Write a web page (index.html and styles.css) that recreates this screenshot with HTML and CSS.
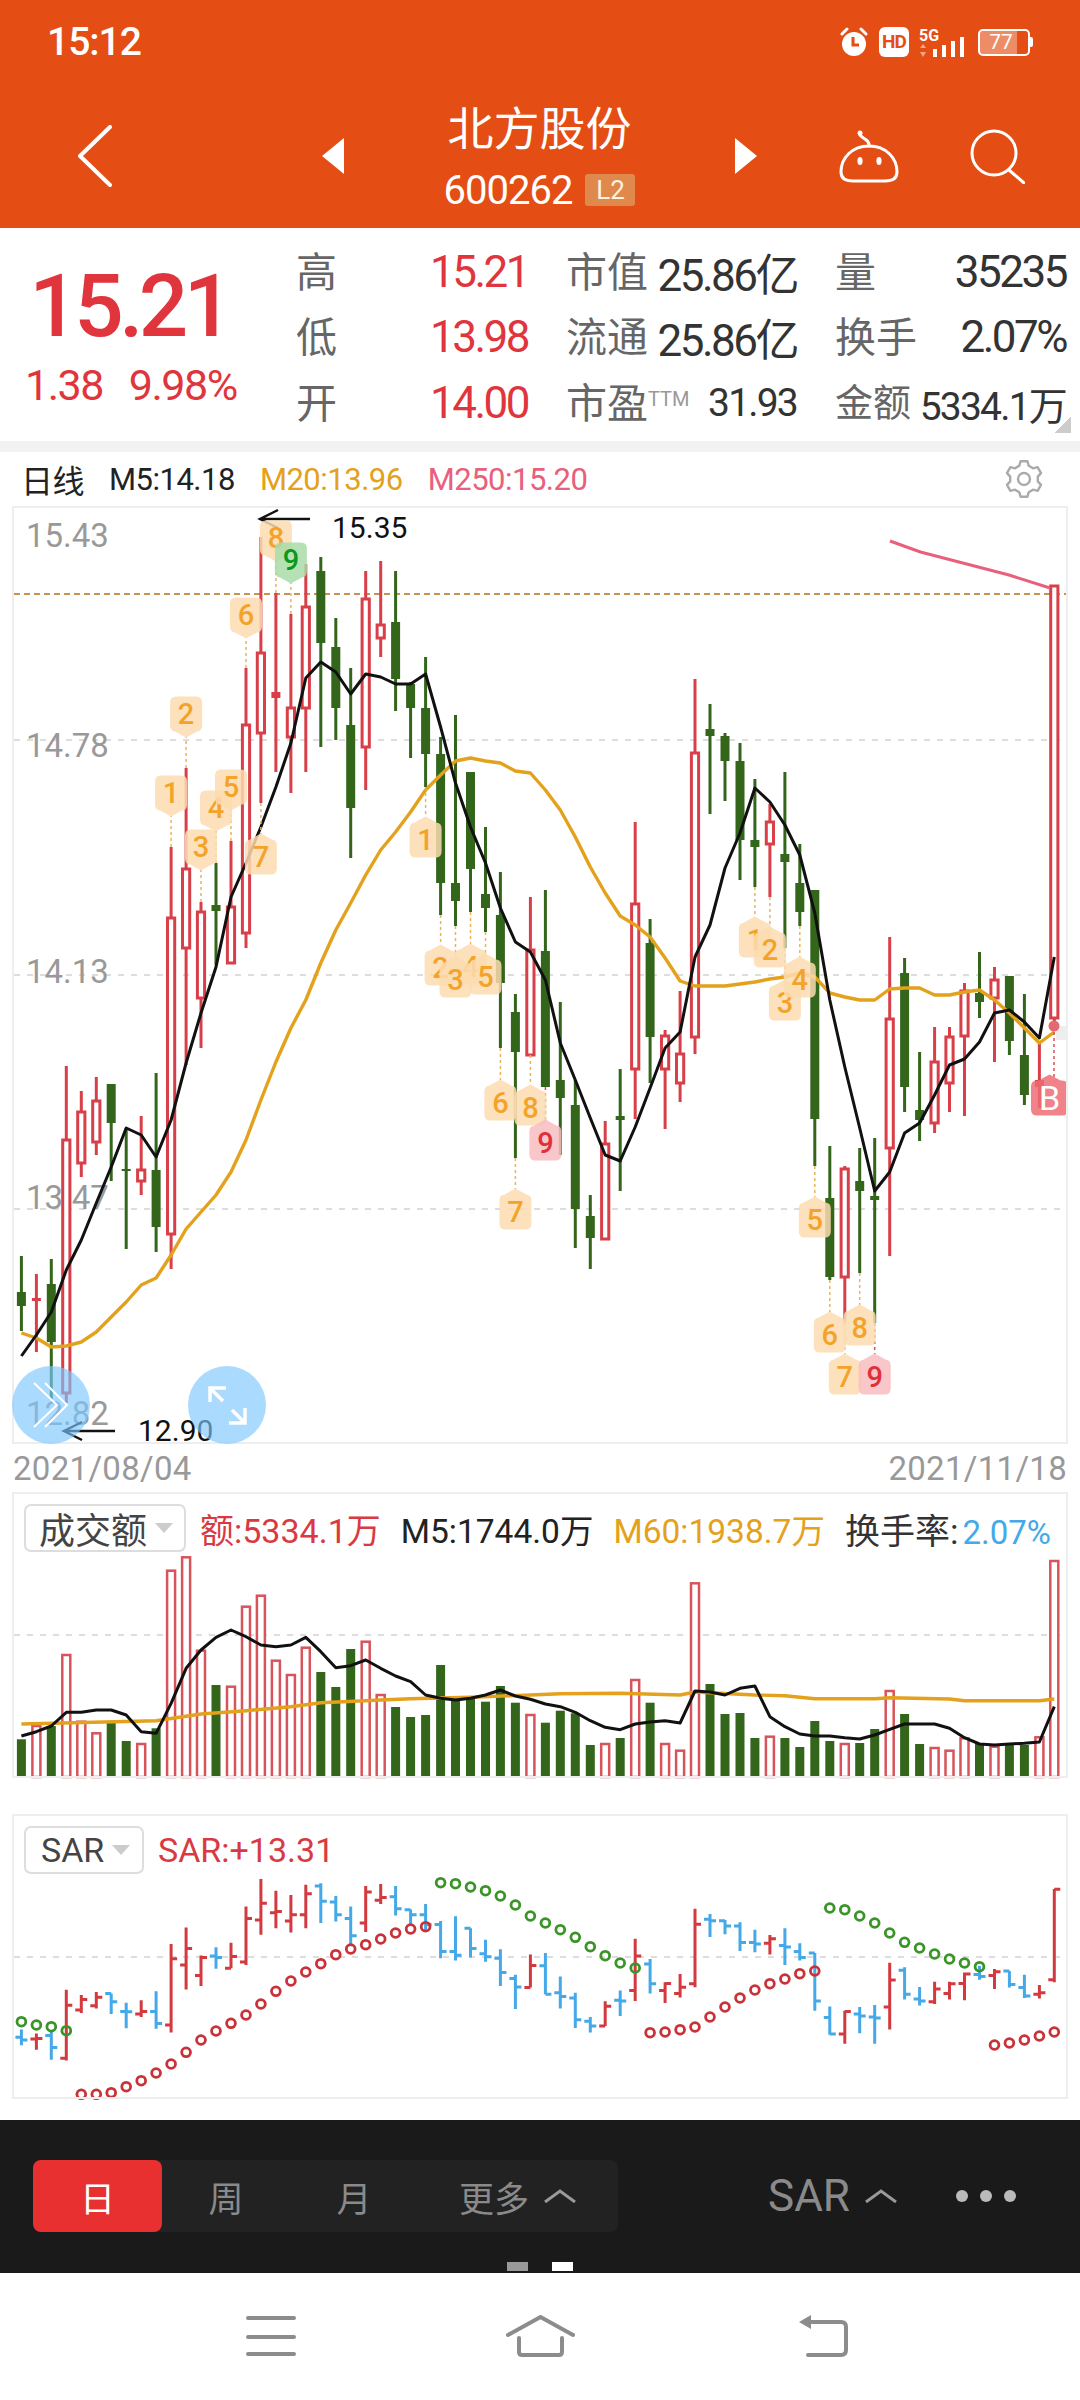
FILE: index.html
```html
<!DOCTYPE html>
<html lang="zh-CN">
<head>
  <meta charset="UTF-8">
  <meta name="viewport" content="width=device-width, initial-scale=1.0">
  <title>北方股份 600262</title>
  <link rel="stylesheet" href="styles.css">
</head>
<body>
  <header class="top">
    <div class="status">
      <span class="clock">15:12</span>
      <div class="status-icons">
        <svg class="alarm" viewBox="0 0 30 30">
          <circle class="fill-white" cx="15" cy="17" r="12"/>
          <path class="stroke-white" d="M3 7 L8 2 M27 7 L22 2"/>
          <path class="alarm-hand" d="M14 10 V18 H20"/>
        </svg>
        <span class="hd">HD</span>
        <svg class="signal" viewBox="0 0 49 30">
          <text class="signal-text" x="0" y="14">5G</text>
          <path class="signal-arrow" d="M4 17 L7 21 H1 Z M4 30 L7 25 H1 Z"/>
          <rect class="fill-white" x="14" y="22" width="4" height="8"/>
          <rect class="fill-white" x="23" y="18" width="4" height="12"/>
          <rect class="fill-white" x="32" y="14" width="4" height="16"/>
          <rect class="fill-white" x="41" y="10" width="4" height="20"/>
        </svg>
        <span class="battery">77</span>
      </div>
    </div>
    <nav class="nav">
      <svg class="back" viewBox="0 0 35 62"><path class="stroke-white thick" d="M33 2 L3 31 L33 60"/></svg>
      <svg class="tri tri-left" viewBox="0 0 22 36"><path class="fill-white" d="M22 0 V36 L0 18 Z"/></svg>
      <div class="title">
        <div class="name">北方股份</div>
        <div class="code-row"><span class="code">600262</span><span class="level">L2</span></div>
      </div>
      <svg class="tri tri-right" viewBox="0 0 22 36"><path class="fill-white" d="M0 0 V36 L22 18 Z"/></svg>
      <svg class="robot" viewBox="0 0 60 53">
        <path class="stroke-white" d="M30 16 C13 16 2 28 2 42 C2 49 7 51 14 51 H46 C53 51 58 49 58 42 C58 28 47 16 30 16 Z"/>
        <path class="stroke-white" d="M30 16 C31 10 24 9 21 5"/>
        <circle class="fill-white" cx="21" cy="3" r="2.5"/>
        <ellipse class="fill-white" cx="21" cy="31" rx="2.6" ry="4"/>
        <ellipse class="fill-white" cx="40" cy="31" rx="2.6" ry="4"/>
      </svg>
      <svg class="search" viewBox="0 0 55 55">
        <circle class="stroke-white" cx="24" cy="24" r="22"/>
        <path class="stroke-white" d="M39 41 L54 54"/>
      </svg>
    </nav>
  </header>

  <section class="quote">
    <div class="price">
      <div class="price-big">15.21</div>
      <div class="price-sub"><span>1.38</span><span>9.98%</span></div>
    </div>
    <div class="stats">
      <span class="label">高</span><span class="up">15.21</span>
      <div class="pair"><span class="label">市值</span><span class="val">25.86亿</span></div>
      <div class="pair last"><span class="label">量</span><span class="val">35235</span></div>

      <span class="label">低</span><span class="up">13.98</span>
      <div class="pair"><span class="label">流通</span><span class="val">25.86亿</span></div>
      <div class="pair last"><span class="label">换手</span><span class="val">2.07%</span></div>

      <span class="label">开</span><span class="up">14.00</span>
      <div class="pair"><span class="label">市盈<sup class="ttm">TTM</sup></span><span class="val small">31.93</span></div>
      <div class="pair last"><span class="label small">金额</span><span class="val small">5334.1万</span></div>
    </div>
    <div class="corner"></div>
  </section>
  <div class="divider"></div>

  <section class="charts">
    <div class="k-legend">
      <span class="dark">日线</span>
      <span class="dark">M5:14.18</span>
      <span class="gold">M20:13.96</span>
      <span class="pink">M250:15.20</span>
      <svg class="gear" viewBox="0 0 40 40">
        <path d="M15.2 6.8 L16.6 2.3 H23.4 L24.8 6.8 L29 9.3 L33.6 8.2 L37 14.1 L33.8 17.6 V22.4 L37 25.9 L33.6 31.8 L29 30.7 L24.8 33.2 L23.4 37.7 H16.6 L15.2 33.2 L11 30.7 L6.4 31.8 L3 25.9 L6.2 22.4 V17.6 L3 14.1 L6.4 8.2 L11 9.3 Z"/>
        <circle cx="20" cy="20" r="6"/>
      </svg>
    </div>

    <div class="panel panel-k">
      <svg class="plot" id="kChart" viewBox="12 506 1056 938"></svg>
      <div class="round-btn btn-slide">
        <svg viewBox="0 0 78 78"><path d="M22 17 L45 39 L22 61 M33 17 L55 39 L33 61"/></svg>
      </div>
      <div class="round-btn btn-expand">
        <svg viewBox="0 0 78 78"><path class="thick" d="M22 36 V22 H38 M22 22 L35 35 M44 44 L57 57 M41 57 H57 V42"/></svg>
      </div>
    </div>
    <div class="dates"><span>2021/08/04</span><span>2021/11/18</span></div>

    <div class="panel panel-vol">
      <div class="legend">
        <div class="drop drop-vol">成交额<i class="drop-arrow"></i></div>
        <span class="red">额:5334.1万</span>
        <span class="dark">M5:1744.0万</span>
        <span class="gold">M60:1938.7万</span>
        <span class="gray-dark turnover">换手率:<b class="blue">2.07%</b></span>
      </div>
      <svg class="plot" id="volChart" viewBox="12 1556 1056 222"></svg>
    </div>

    <div class="panel panel-sar">
      <div class="legend">
        <div class="drop drop-sar">SAR<i class="drop-arrow"></i></div>
        <span class="red">SAR:+13.31</span>
      </div>
      <svg class="plot" id="sarChart" viewBox="12 1878 1056 221"></svg>
    </div>
  </section>

  <section class="toolbar">
    <div class="toolbar-row">
      <div class="tabs">
        <span class="tab active">日</span>
        <span class="tab">周</span>
        <span class="tab">月</span>
        <span class="tab tab-more">更多<svg class="caret" viewBox="0 0 34 14"><path d="M2 13 L17 2 L32 13"/></svg></span>
      </div>
      <span class="sar-pick">SAR<svg class="caret" viewBox="0 0 34 14"><path d="M2 13 L17 2 L32 13"/></svg></span>
      <div class="dots"><i></i><i></i><i></i></div>
    </div>
    <div class="pager"><i></i><i class="on"></i></div>
  </section>

  <footer class="sysnav">
    <svg class="sys-menu" viewBox="0 0 50 42"><path d="M2 3 H48 M2 22 H48 M2 39 H48"/></svg>
    <svg class="sys-home" viewBox="0 0 69 42"><path d="M2 20 L34.5 2 L67 20 M13 23 V37 Q13 40 16 40 H53 Q56 40 56 37 V23"/></svg>
    <svg class="sys-back" viewBox="0 0 49 42">
      <path d="M8 7 H42 Q47 7 47 12 V35 Q47 40 42 40 H9"/>
      <path class="head" d="M12 0 V14 L0 7 Z"/>
    </svg>
  </footer>

  <script src="chart.js"></script>
</body>
</html>
```

FILE: styles.css
```css
* {
  box-sizing: border-box;
}

body {
  margin: 0;
  width: 1080px;
  height: 2400px;
  overflow: hidden;
  background: #fff;
  font-family: Roboto, "Noto Sans CJK SC", sans-serif;
  color: #333;
}

/* header */
.top {
  height: 228px;
  background: #e44e14;
  color: #fff;
}

.status {
  height: 84px;
  display: flex;
  align-items: center;
  justify-content: space-between;
  padding: 0 48px 0 47px;
}

.clock {
  font-size: 39px;
  font-weight: 500;
  letter-spacing: -1px;
}

.status-icons {
  display: flex;
  align-items: center;
  gap: 10px;
}

.fill-white {
  fill: #fff;
}

.stroke-white {
  fill: none;
  stroke: #fff;
  stroke-width: 3;
  stroke-linecap: round;
  stroke-linejoin: round;
}

.stroke-white.thick {
  stroke-width: 4;
}

.alarm {
  width: 30px;
  height: 30px;
}

.alarm-hand {
  fill: none;
  stroke: #e44e14;
  stroke-width: 3;
}

.hd {
  width: 30px;
  height: 30px;
  background: #fff;
  color: #e44e14;
  border-radius: 6px;
  font-size: 19px;
  font-weight: 700;
  line-height: 30px;
  text-align: center;
  letter-spacing: -1px;
}

.signal {
  width: 49px;
  height: 30px;
}

.signal-text {
  fill: #fff;
  font-size: 16px;
  font-weight: 700;
}

.signal-arrow {
  fill: rgba(255, 255, 255, .5);
}

.battery {
  position: relative;
  width: 52px;
  height: 27px;
  margin-right: 2px;
  border: 2px solid #fff;
  border-radius: 5px;
  background: linear-gradient(90deg, rgba(255, 255, 255, .35) 77%, transparent 77%);
  font-size: 21px;
  line-height: 23px;
  text-align: center;
  padding-right: 6px;
}

.battery::after {
  content: "";
  position: absolute;
  right: -5px;
  top: 6px;
  width: 3px;
  height: 10px;
  background: #fff;
  border-radius: 0 2px 2px 0;
}

.nav {
  height: 144px;
  display: flex;
  align-items: center;
  padding-left: 77px;
}

.back {
  width: 35px;
  height: 62px;
}

.tri {
  width: 22px;
  height: 36px;
  flex: none;
}

.tri-left {
  margin-left: 210px;
}

.title {
  width: 391px;
  text-align: center;
}

.name {
  font-size: 46px;
  line-height: 48px;
}

.code-row {
  display: flex;
  align-items: center;
  justify-content: center;
  gap: 13px;
  margin-top: 20px;
  height: 34px;
}

.code {
  font-size: 40px;
  letter-spacing: -1px;
}

.level {
  width: 50px;
  height: 32px;
  background: #df8a4c;
  border-radius: 3px;
  color: #fff3e0;
  font-size: 26px;
  line-height: 32px;
}

.robot {
  width: 60px;
  height: 53px;
  margin-left: 82px;
}

.search {
  width: 55px;
  height: 55px;
  margin-left: 71px;
}

/* quote block */
.quote {
  position: relative;
  height: 213px;
  display: flex;
}

.price {
  width: 296px;
  padding: 40px 0 0 25px;
  color: #e0353c;
}

.price-big {
  width: 208px;
  font-size: 87px;
  line-height: 76px;
  font-weight: 500;
  letter-spacing: -4.5px;
  text-align: center;
}

.price-sub {
  display: flex;
  gap: 26px;
  margin-top: 18px;
  font-size: 43px;
  line-height: 46px;
  letter-spacing: -1.5px;
}

.stats {
  padding-top: 11px;
  display: grid;
  grid-template-columns: 134px 136px 231px 269px;
  grid-auto-rows: 65.5px;
  align-items: center;
  font-size: 44px;
}

.label {
  color: #666;
  font-size: 41px;
  margin-top: -6px;
}

.label.small {
  font-size: 38px;
}

.up {
  color: #e0353c;
  letter-spacing: -2.5px;
}

.pair {
  display: flex;
  align-items: center;
  justify-content: space-between;
}

.pair.last {
  margin-left: 38px;
}

.val {
  color: #333;
  letter-spacing: -2.5px;
}

.val.small {
  font-size: 39px;
  letter-spacing: -1.8px;
}

.ttm {
  font-size: 20px;
  color: #999;
  vertical-align: 12px;
  line-height: 0;
}

.corner {
  position: absolute;
  right: 9px;
  bottom: 8px;
  width: 17px;
  height: 16px;
  background: linear-gradient(135deg, transparent 50%, #ccc 50%);
}

.divider {
  height: 11px;
  background: #f2f2f2;
}

/* charts */
.charts {
  padding-left: 12px;
  width: 1068px;
}

.k-legend {
  height: 54px;
  margin-left: -12px;
  padding-left: 21px;
  display: flex;
  align-items: center;
  gap: 25px;
  font-size: 31px;
  letter-spacing: -.5px;
}

.k-legend .dark:first-child {
  font-size: 32px;
}

.dark {
  color: #222;
}

.gold {
  color: #e4a11b;
}

.pink {
  color: #e8607c;
}

.red {
  color: #d93a42;
}

.blue {
  color: #45a8e8;
  font-weight: 400;
  font-size: 33px;
  margin-left: 4px;
}

.gray-dark {
  color: #333;
}

.gear {
  width: 40px;
  height: 40px;
  margin-left: auto;
  margin-right: 24px;
  fill: none;
  stroke: #aaa;
  stroke-width: 2.4;
  stroke-linejoin: round;
}

.panel {
  position: relative;
  width: 1056px;
  outline: 2px solid #eee;
  outline-offset: -2px;
}

.panel-k {
  height: 938px;
}

.panel-vol {
  height: 286px;
  margin-bottom: 36px;
}

.panel-sar {
  height: 285px;
}

.plot {
  display: block;
  width: 1056px;
  overflow: visible;
}

.panel-k .plot {
  height: 938px;
}

.panel-vol .plot {
  height: 222px;
}

.panel-sar .plot {
  height: 221px;
}

.legend {
  height: 64px;
  display: flex;
  align-items: center;
  padding: 8px 0 0 12px;
  gap: 14px;
  font-size: 34px;
}

.legend .dark,
.legend .gold {
  margin-left: 6px;
  font-size: 33.5px;
}

.legend .turnover {
  margin-left: 6px;
  font-size: 35px;
}

.drop {
  display: flex;
  align-items: center;
  height: 48px;
  border: 2px solid #ddd;
  border-radius: 7px;
  padding-left: 13px;
  color: #444;
  font-size: 36px;
}

.drop-vol {
  width: 162px;
}

.drop-sar {
  width: 120px;
  padding-left: 15px;
  font-size: 34px;
}

.drop-arrow {
  margin-left: 8px;
  border-left: 9px solid transparent;
  border-right: 9px solid transparent;
  border-top: 10px solid #ccc;
}

.dates {
  height: 48px;
  display: flex;
  align-items: center;
  justify-content: space-between;
  width: 1056px;
  padding: 0 1px;
  color: #999;
  font-size: 33px;
  letter-spacing: .3px;
}

.round-btn {
  position: absolute;
  top: 860px;
  width: 78px;
  height: 78px;
  border-radius: 50%;
  background: rgba(125, 200, 255, .65);
}

.btn-slide {
  left: 0;
}

.btn-expand {
  left: 176px;
}

.round-btn svg {
  display: block;
  fill: none;
  stroke: #fff;
  stroke-width: 2;
}

.round-btn .thick {
  stroke-width: 3.5;
}

/* svg chart parts, built in chart.js */
.grid {
  stroke: #ddd;
  stroke-width: 2;
  stroke-dasharray: 6 7;
}

.price-line {
  stroke: #c8924f;
  stroke-width: 2;
  stroke-dasharray: 6 4;
}

.axis-label {
  fill: #999;
  font-size: 33px;
}

.mark-label {
  fill: #111;
  font-size: 30px;
}

.mark-arrow {
  fill: none;
  stroke: #111;
  stroke-width: 2.5;
}

.wick-r {
  stroke: #d83f48;
  stroke-width: 3;
}

.wick-g {
  stroke: #33651a;
  stroke-width: 3;
}

.body-r {
  fill: #fff;
  stroke: #d83f48;
  stroke-width: 3;
}

.body-r-solid {
  fill: #d83f48;
}

.body-g {
  fill: #33651a;
}

.line {
  fill: none;
  stroke-width: 3;
  stroke-linejoin: round;
}

.line-black {
  stroke: #111;
}

.line-gold {
  stroke: #e4a11b;
  stroke-width: 3.4;
}

.line-pink {
  stroke: #e8607c;
}

.tag-lead {
  stroke: #e9b45c;
  stroke-width: 1.5;
  stroke-dasharray: 3 3;
}

.tag-lead.lead-red {
  stroke: #d8505a;
}

.tag-shape {
  opacity: .85;
}

.tag-orange .tag-shape {
  fill: #fcdcb0;
}

.tag-orange .tag-num {
  fill: #f4a32a;
}

.tag-green .tag-shape {
  fill: #a8dca8;
}

.tag-green .tag-num {
  fill: #0a9a1a;
}

.tag-pink .tag-shape {
  fill: #f8bcc0;
}

.tag-pink .tag-num {
  fill: #e0303a;
}

.tag-buy .tag-shape {
  fill: #ee6c74;
}

.tag-buy .tag-num {
  fill: #fff;
  font-size: 34px;
  font-weight: 400;
}

.tag-num {
  font-size: 29px;
  font-weight: 500;
  text-anchor: middle;
  dominant-baseline: central;
}

.last-dot {
  fill: #e56a70;
}

.edge-mark {
  fill: #eee;
}

.vol-r {
  fill: #fff;
  stroke: #d8545c;
  stroke-width: 2.5;
}

.vol-g {
  fill: #33651a;
}

.bar-r {
  fill: none;
  stroke: #d23a40;
  stroke-width: 3;
}

.bar-b {
  fill: none;
  stroke: #45a8e8;
  stroke-width: 3;
}

.dot-g {
  fill: none;
  stroke: #3a9428;
  stroke-width: 2.8;
}

.dot-r {
  fill: none;
  stroke: #c83238;
  stroke-width: 2.8;
}

/* bottom bar */
.toolbar {
  margin-top: 21px;
  height: 153px;
  background: #1a1a1a;
  padding: 40px 0 0 33px;
}

.toolbar-row {
  display: flex;
  align-items: center;
}

.tabs {
  display: flex;
  width: 585px;
  height: 72px;
  background: #222;
  border-radius: 8px;
}

.tab {
  width: 128px;
  display: flex;
  align-items: center;
  justify-content: center;
  color: #8a8a8a;
  font-size: 35px;
}

.tab.active {
  width: 129px;
  background: #e83030;
  border-radius: 8px;
  color: #fff;
}

.tab.tab-more {
  width: 200px;
  gap: 14px;
}

.caret {
  width: 34px;
  height: 14px;
  fill: none;
  stroke: #999;
  stroke-width: 3;
}

.sar-pick {
  display: flex;
  align-items: center;
  gap: 14px;
  margin-left: 150px;
  color: #8a8a8a;
  font-size: 44px;
}

.dots {
  display: flex;
  gap: 12px;
  margin-left: 58px;
}

.dots i {
  width: 12px;
  height: 12px;
  border-radius: 50%;
  background: #bbb;
}

.pager {
  display: flex;
  gap: 24px;
  margin: 30px 0 0 474px;
}

.pager i {
  width: 21px;
  height: 9px;
  background: #999;
}

.pager i.on {
  background: #fff;
}

.sysnav {
  height: 127px;
  display: flex;
  align-items: flex-start;
  padding: 42px 0 0 246px;
}

.sysnav svg {
  height: 42px;
  fill: none;
  stroke: #8c8c8c;
  stroke-width: 4;
  stroke-linecap: round;
  stroke-linejoin: round;
}

.sys-menu {
  width: 50px;
}

.sys-home {
  width: 69px;
  margin-left: 210px;
}

.sys-back {
  width: 49px;
  margin-left: 224px;
}

.sysnav .head {
  fill: #8c8c8c;
  stroke: none;
}
```

FILE: chart.js
```js
const xAt = i => 21.4 + 14.97 * i;

// high, body top, body bottom, low, colour (page y pixels)
const candles = [
  [1256,1292,1306,1331,'g'],[1274,1298,1301,1352,'r'],[1259,1284,1342,1400,'g'],[1066,1140,1393,1403,'r'],
  [1091,1112,1163,1177,'r'],[1077,1101,1142,1155,'r'],[1084,1084,1123,1181,'g'],[1128,1169,1171,1249,'g'],
  [1116,1170,1181,1195,'r'],[1073,1170,1227,1252,'g'],[847,918,1234,1269,'r'],[768,869,948,1065,'r'],
  [902,912,998,1048,'r'],[863,905,911,965,'g'],[841,907,963,963,'r'],[668,725,933,948,'r'],
  [537,653,733,803,'r'],[593,692,698,772,'r'],[614,708,737,793,'r'],[564,607,708,772,'r'],
  [557,571,643,747,'g'],[618,647,708,740,'g'],[668,725,808,858,'g'],[571,599,747,790,'r'],
  [561,625,638,657,'r'],[571,622,679,711,'g'],[682,684,708,758,'g'],[657,708,754,787,'g'],
  [737,754,883,915,'g'],[715,883,901,926,'g'],[772,772,869,912,'g'],[827,894,908,932,'g'],
  [872,915,983,1048,'g'],[994,1012,1052,1158,'g'],[897,950,1055,1055,'r'],[890,951,1087,1087,'g'],
  [1002,1080,1098,1155,'g'],[1080,1105,1209,1248,'g'],[1195,1216,1238,1269,'g'],[1121,1144,1239,1239,'r'],
  [1069,1116,1120,1191,'g'],[822,904,1069,1119,'r'],[919,943,1037,1083,'g'],[1030,1036,1069,1129,'r'],
  [991,1054,1083,1102,'r'],[679,753,1037,1054,'r'],[704,729,736,814,'g'],[733,736,761,801,'g'],
  [743,761,840,880,'g'],[779,840,847,887,'g'],[804,822,844,897,'r'],[772,854,862,948,'g'],
  [844,883,912,926,'g'],[890,890,1119,1166,'g'],[1146,1198,1277,1280,'g'],[1166,1169,1277,1323,'r'],
  [1148,1181,1191,1273,'g'],[1138,1196,1200,1323,'g'],[937,1019,1148,1256,'r'],[958,973,1087,1112,'g'],
  [1052,1110,1120,1141,'g'],[1027,1062,1123,1133,'r'],[1027,1037,1083,1112,'r'],[983,991,1036,1116,'r'],
  [952,993,1002,1018,'g'],[967,980,998,1062,'r'],[976,976,1041,1055,'g'],[994,1055,1095,1105,'g'],
  [1043,1080,1087,1108,'r'],[585,586,1018,1030,'r']
];

const ma5 = [1356,1335,1312,1270,1240,1203,1167,1128,1135,1157,1120,1063,1013,967,897,863,827,787,743,678,662,672,694,674,677,684,684,674,727,783,827,863,908,942,952,980,1043,1080,1118,1155,1161,1127,1088,1048,1032,957,925,868,833,788,802,825,855,913,1000,1067,1128,1191,1172,1133,1123,1095,1065,1059,1042,1013,1010,1022,1038,957];
const ma20 = [1333,1338,1347,1346,1342,1332,1317,1302,1285,1278,1255,1229,1212,1195,1172,1140,1100,1062,1028,1000,963,930,903,875,850,832,812,790,775,761,758,761,763,771,773,790,810,837,867,893,916,925,937,958,981,986,986,986,984,982,979,977,973,977,993,997,1000,1000,989,988,988,995,995,992,990,1000,1013,1028,1043,1032];

// number tags: candle index, label, centre y, y of the candle end, style
const tags = [
  [10,'1',793,847],[11,'2',714,768],[12,'3',847,902],[13,'4',808,863],[14,'5',787,841],[15,'6',615,668],
  [16,'7',857,803],[17,'8',538,593],[18,'9',560,614,'green'],
  [27,'1',840,787],[28,'2',968,915],[30,'4',967,912],[29,'3',980,926],[31,'5',977,932],
  [32,'6',1103,1048],[33,'7',1212,1158],[34,'8',1108,1055],[35,'9',1143,1087,'pink'],
  [49,'1',940,887],[50,'2',950,897],[51,'3',1003,948],[52,'4',980,926],[53,'5',1220,1166],
  [54,'6',1335,1280],[56,'8',1328,1273],[55,'7',1377,1323],[57,'9',1377,1323,'pink']
];

const volTops = [778,738,738,525,725,760,725,783,792,745,272,232,512,615,620,380,347,542,585,503,576,621,507,485,645,681,711,705,555,650,650,665,618,668,705,728,692,700,795,792,774,600,668,792,812,310,612,702,699,774,770,774,801,723,783,792,789,747,633,702,792,804,812,775,790,800,790,795,772,243];
const volMa5 = [768,755,738,697,697,690,690,705,755,760,670,565,510,472,450,470,495,500,495,472,515,563,557,540,565,588,605,645,655,660,655,645,630,648,658,672,680,697,722,742,749,732,726,722,729,633,636,645,625,618,710,740,762,768,768,773,777,765,748,732,732,732,745,773,792,795,792,790,786,680];
const volMa60 = [[0,732],[9,722],[12,702],[15,692],[18,680],[20,668],[24,660],[26,656],[30,652],[34,645],[36,641],[40,640],[44,645],[45,636],[49,645],[51,647],[53,656],[57,656],[58,653],[62,657],[63,662],[68,662],[69,657]];

const sarDots = [665,675,680,692,883,883,878,860,842,819,792,757,720,693,670,645,612,574,543,516,491,464,447,434,417,399,387,380,248,251,261,272,288,315,348,369,389,412,440,467,489,504,698,696,689,681,651,621,594,570,551,537,521,513,324,329,348,369,399,427,444,462,477,489,500,735,729,720,708,696];
const sarGreen = i => i < 4 || (i >= 28 && i <= 41) || (i >= 54 && i <= 64);

const n = v => v.toFixed(1);

function polyline(points, cls) {
  return `<polyline class="line ${cls}" points="${points.map(p => n(p[0]) + ',' + n(p[1])).join(' ')}"/>`;
}

function hline(y, cls) {
  return `<line class="${cls}" x1="14" x2="1066" y1="${y}" y2="${y}"/>`;
}

function drawCandle(c, i) {
  const [high, top, bot, low, col] = c;
  const x = n(xAt(i));
  const h = bot - top;
  if (col === 'g') {
    return `<line class="wick-g" x1="${x}" x2="${x}" y1="${high}" y2="${low}"/>` +
      `<rect class="body-g" x="${n(xAt(i) - 4.5)}" y="${top}" width="9" height="${h}"/>`;
  }
  if (h < 8) {
    return `<line class="wick-r" x1="${x}" x2="${x}" y1="${high}" y2="${low}"/>` +
      `<rect class="body-r-solid" x="${n(xAt(i) - 4.5)}" y="${top}" width="9" height="${h}"/>`;
  }
  return `<line class="wick-r" x1="${x}" x2="${x}" y1="${high}" y2="${top}"/>` +
    `<line class="wick-r" x1="${x}" x2="${x}" y1="${bot}" y2="${low}"/>` +
    `<rect class="body-r" x="${n(xAt(i) - 3.6)}" y="${top}" width="7.2" height="${h}"/>`;
}

function tagShape(w) {
  const h = 17.5, r = 6;
  return `M${-w + r} ${-h} H${w - r} Q${w} ${-h} ${w} ${-h + r} V${h - r} Q${w} ${h} ${w - r} ${h} H11 L0 ${h + 6} L-11 ${h} H${-w + r} Q${-w} ${h} ${-w} ${h - r} V${-h + r} Q${-w} ${-h} ${-w + r} ${-h} Z`;
}

function drawLead(x, cy, end, style) {
  const from = end < cy ? cy - 23 : cy + 23;
  const cls = style === 'pink' || style === 'buy' ? 'tag-lead lead-red' : 'tag-lead';
  return `<line class="${cls}" x1="${n(x)}" x2="${n(x)}" y1="${end}" y2="${from}"/>`;
}

function drawTag(x, label, cy, end, style, w) {
  const flip = end < cy ? 'scale(1,-1)' : 'scale(1,1)';
  return `<g class="tag-${style}" transform="translate(${n(x)},${cy})">` +
    `<path class="tag-shape" transform="${flip}" d="${tagShape(w)}"/>` +
    `<text class="tag-num" x="0" y="0">${label}</text></g>`;
}

function drawMark(xHead, y, xTail, label, xText, yText) {
  return `<path class="mark-arrow" d="M${xTail} ${y} H${xHead} M${xHead + 18} ${y - 9} L${xHead} ${y} L${xHead + 18} ${y + 9}"/>` +
    `<text class="mark-label" x="${xText}" y="${yText}">${label}</text>`;
}

function buildK() {
  let s = '';
  s += hline(740, 'grid') + hline(975, 'grid') + hline(1209, 'grid') + hline(594, 'price-line');
  [['15.43',547],['14.78',757],['14.13',983],['13.47',1209],['12.82',1425]].forEach(a => {
    s += `<text class="axis-label" x="26" y="${a[1]}">${a[0]}</text>`;
  });
  s += '<rect class="edge-mark" x="1056" y="1026" width="12" height="14"/>';
  candles.forEach((c, i) => { s += drawCandle(c, i); });
  s += polyline(ma20.map((y, i) => [xAt(i), y]), 'line-gold');
  s += polyline(ma5.map((y, i) => [xAt(i), y]), 'line-black');
  s += polyline([[890,541],[920.5,552],[1009,575],[1050,588]], 'line-pink');
  s += drawMark(260, 519, 310, '15.35', 332, 538);
  s += drawMark(64, 1431, 115, '12.90', 138, 1441);
  tags.forEach(t => { s += drawLead(xAt(t[0]), t[2], t[3], t[4] || 'orange'); });
  tags.forEach(t => { s += drawTag(xAt(t[0]), t[1], t[2], t[3], t[4] || 'orange', 16); });
  s += drawLead(1054, 1100, 1032, 'buy');
  s += drawTag(1049.5, 'B', 1098, 1070, 'buy', 18.5);
  s += '<circle class="last-dot" cx="1054" cy="1026" r="5.5"/>';
  document.getElementById('kChart').innerHTML = s;
}

function volY(z) {
  return 1480 + z / 3;
}

function buildVol() {
  let s = hline(1635, 'grid');
  const base = 1778;
  volTops.forEach((z, i) => {
    const y = volY(z);
    const x = xAt(i);
    if (candles[i][4] === 'g') {
      s += `<rect class="vol-g" x="${n(x - 4.5)}" y="${n(y)}" width="9" height="${n(base - y)}"/>`;
    } else {
      s += `<rect class="vol-r" x="${n(x - 4)}" y="${n(y)}" width="8" height="${n(base - y - 1)}"/>`;
    }
  });
  s += polyline(volMa60.map(p => [xAt(p[0]), volY(p[1])]), 'line-gold');
  s += polyline(volMa5.map((z, i) => [xAt(i), volY(z)]), 'line-black');
  document.getElementById('volChart').innerHTML = s;
}

// the SAR panel shows the same prices as bars, on its own scale
function sarY(y) {
  return 1879 + (y - 537) * 0.2095;
}

function buildSar() {
  let s = hline(1957, 'grid');
  candles.forEach((c, i) => {
    const x = xAt(i);
    const up = c[4] === 'r';
    const open = sarY(up ? c[2] : c[1]);
    const close = sarY(up ? c[1] : c[2]);
    s += `<path class="${up ? 'bar-r' : 'bar-b'}" d="M${n(x)} ${n(sarY(c[0]))} V${n(sarY(c[3]))} M${n(x - 6)} ${n(open)} H${n(x)} M${n(x)} ${n(close)} H${n(x + 6)}"/>`;
  });
  sarDots.forEach((z, i) => {
    s += `<circle class="${sarGreen(i) ? 'dot-g' : 'dot-r'}" cx="${n(xAt(i))}" cy="${n(1800 + z / 3)}" r="4.4"/>`;
  });
  document.getElementById('sarChart').innerHTML = s;
}

buildK();
buildVol();
buildSar();
```
